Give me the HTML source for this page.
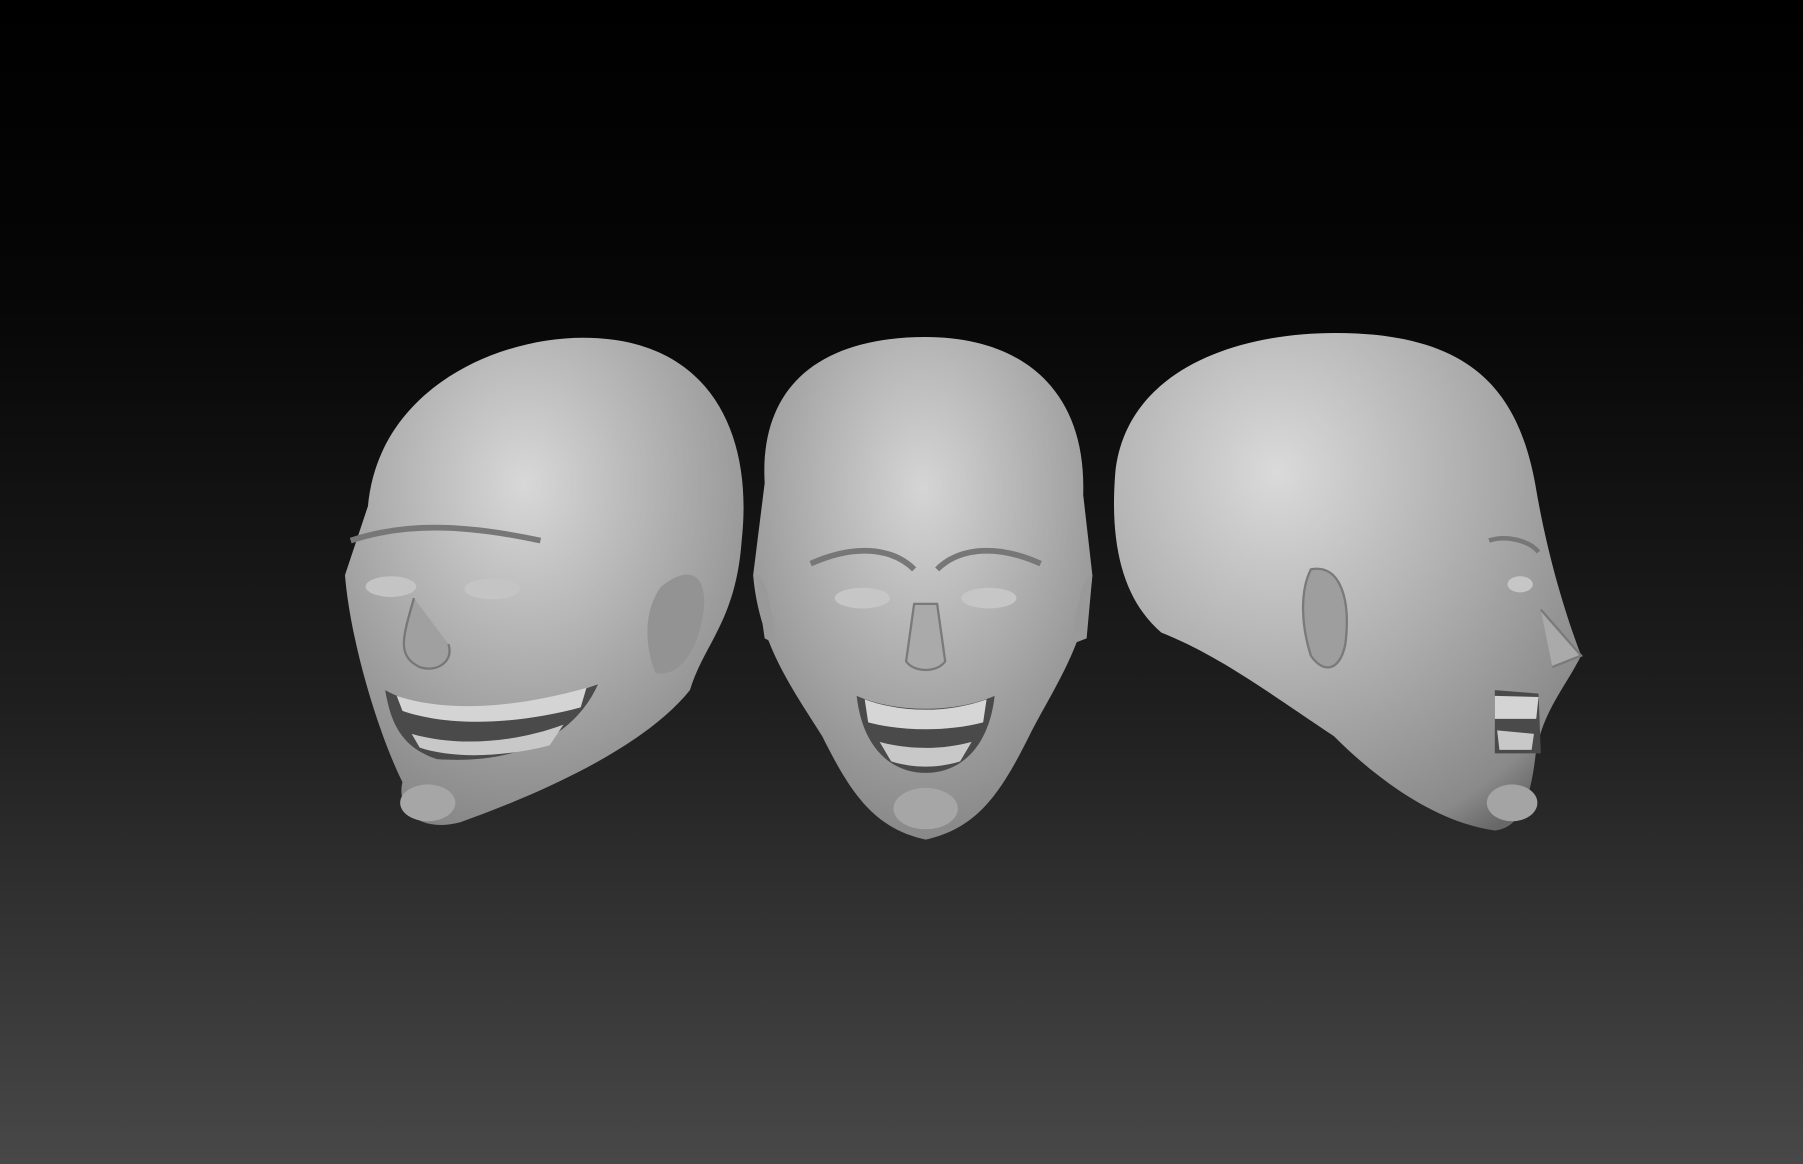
<!DOCTYPE html>
<html><head><meta charset="utf-8"><style>
html,body{margin:0;padding:0;width:1803px;height:1164px;overflow:hidden;background:#222}
svg{display:block}
</style></head><body>
<svg width="1803" height="1164" viewBox="0 0 1568 1012" preserveAspectRatio="none" xmlns="http://www.w3.org/2000/svg">
<defs>
<linearGradient id="bg" x1="0" y1="0" x2="0" y2="1">
<stop offset="0" stop-color="#000"/>
<stop offset="0.25" stop-color="#060606"/>
<stop offset="0.6" stop-color="#1e1e1e"/>
<stop offset="1" stop-color="#484848"/>
</linearGradient>
<radialGradient id="hL" cx="0.45" cy="0.3" r="0.8">
<stop offset="0" stop-color="#d8d8d8"/><stop offset="0.5" stop-color="#ababab"/><stop offset="0.9" stop-color="#888"/><stop offset="1" stop-color="#666"/>
</radialGradient>
<radialGradient id="hM" cx="0.5" cy="0.3" r="0.8">
<stop offset="0" stop-color="#d5d5d5"/><stop offset="0.5" stop-color="#a9a9a9"/><stop offset="0.9" stop-color="#868686"/><stop offset="1" stop-color="#646464"/>
</radialGradient>
<radialGradient id="hR" cx="0.35" cy="0.28" r="0.85">
<stop offset="0" stop-color="#dadada"/><stop offset="0.5" stop-color="#aeaeae"/><stop offset="0.9" stop-color="#8a8a8a"/><stop offset="1" stop-color="#686868"/>
</radialGradient>
</defs>
<rect width="1568" height="1012" fill="url(#bg)"/>

<!-- left head -->
<path d="M320 440 C330 330 450 285 530 295 C620 305 655 380 645 470 C640 540 612 560 600 600 C560 650 470 690 400 715 C360 725 345 700 350 680 C330 640 305 560 300 500 Z" fill="url(#hL)"/>
<path d="M575 510 C600 490 615 500 612 530 C608 565 590 590 570 585 C560 560 560 530 575 510Z" fill="#939393"/>
<path d="M305 470 C350 455 400 455 470 470" stroke="#777" stroke-width="5" fill="none"/>
<ellipse cx="340" cy="510" rx="22" ry="9" fill="#c4c4c4"/>
<ellipse cx="428" cy="512" rx="24" ry="9" fill="#c4c4c4"/>
<path d="M360 520 C350 555 345 570 365 580 C380 585 395 575 390 560" fill="#a0a0a0" stroke="#777" stroke-width="2"/>
<path d="M335 600 C380 625 450 620 520 595 C500 640 450 665 380 660 C350 650 340 630 335 600Z" fill="#4a4a4a"/>
<path d="M345 605 C390 620 450 615 510 598 L505 615 C450 630 390 632 350 618Z" fill="#d4d4d4"/>
<path d="M358 638 C400 650 450 645 490 630 L478 648 C440 658 395 660 365 650Z" fill="#c8c8c8"/>
<ellipse cx="372" cy="698" rx="24" ry="16" fill="#a6a6a6"/>

<!-- middle head -->
<path d="M665 420 C660 330 720 293 805 293 C890 293 945 340 942 430 L950 500 C945 560 915 600 895 640 C870 690 850 720 805 730 C760 720 740 690 715 640 C690 600 660 560 655 500 Z" fill="url(#hM)"/>
<path d="M705 490 C750 470 780 480 795 495 M815 495 C830 480 860 470 905 490" stroke="#777" stroke-width="5" fill="none"/>
<ellipse cx="750" cy="520" rx="24" ry="9" fill="#c6c6c6"/>
<ellipse cx="860" cy="520" rx="24" ry="9" fill="#c6c6c6"/>
<path d="M795 525 L788 575 C795 585 815 585 822 575 L815 525Z" fill="#aaa" stroke="#7a7a7a" stroke-width="2"/>
<path d="M745 605 C780 620 830 620 865 605 C860 650 835 672 805 672 C775 672 750 650 745 605Z" fill="#4a4a4a"/>
<path d="M752 608 C785 620 825 620 858 608 L855 628 C825 636 785 636 755 628Z" fill="#d6d6d6"/>
<path d="M765 645 C790 652 820 652 845 645 L835 662 C815 668 795 668 775 662Z" fill="#c8c8c8"/>
<ellipse cx="805" cy="703" rx="28" ry="18" fill="#a6a6a6"/>
<path d="M657 500 C668 500 672 540 675 560 L665 555Z" fill="#999"/>
<path d="M950 500 C940 500 935 540 932 560 L945 555Z" fill="#999"/>

<!-- right head -->
<path d="M970 410 C980 320 1080 285 1180 290 C1280 295 1320 340 1335 420 C1345 480 1360 530 1375 570 C1360 600 1340 620 1335 660 C1330 700 1320 720 1300 722 C1250 715 1200 680 1160 640 C1100 600 1060 570 1010 550 C975 520 965 470 970 410Z" fill="url(#hR)"/>
<path d="M1140 495 C1165 490 1175 520 1170 560 C1165 585 1150 585 1140 570 C1132 545 1130 515 1140 495Z" fill="#9e9e9e" stroke="#7a7a7a" stroke-width="2"/>
<path d="M1295 470 C1310 465 1330 470 1338 480" stroke="#777" stroke-width="4" fill="none"/>
<ellipse cx="1322" cy="508" rx="11" ry="7" fill="#c6c6c6"/>
<path d="M1340 530 L1375 570 L1350 580" fill="#aaa" stroke="#7a7a7a" stroke-width="2"/>
<path d="M1300 600 L1338 603 L1340 655 L1300 655Z" fill="#4a4a4a"/>
<path d="M1300 605 L1338 606 L1336 625 L1300 625Z" fill="#d4d4d4"/>
<path d="M1302 635 L1334 638 L1332 652 L1304 652Z" fill="#c8c8c8"/>
<ellipse cx="1315" cy="698" rx="22" ry="16" fill="#a4a4a4"/>
</svg>
</body></html>
